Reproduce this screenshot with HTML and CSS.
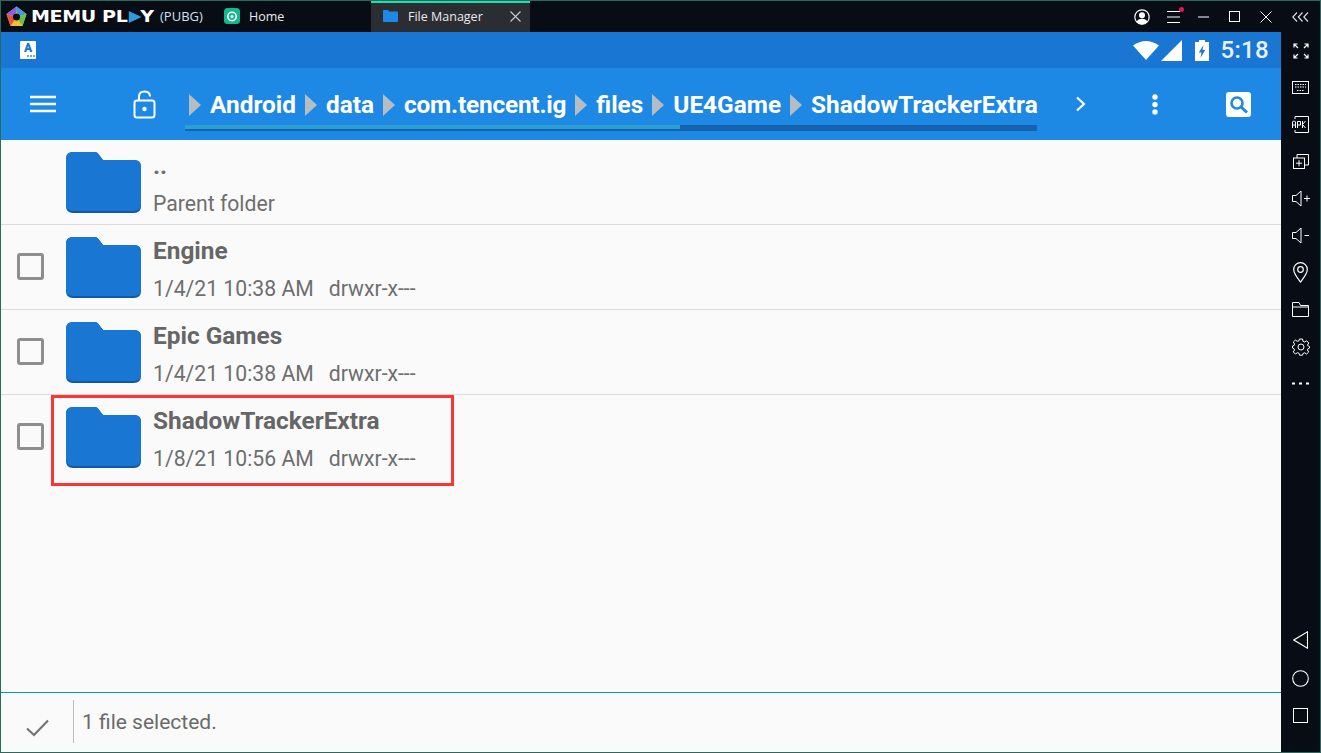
FILE: index.html
```html
<!DOCTYPE html>
<html lang="en">
<head>
<meta charset="utf-8">
<title>File Manager</title>
<link rel="stylesheet" href="styles.css">
</head>
<body>
<svg class="defs" width="0" height="0" aria-hidden="true">
  <symbol id="folder" viewBox="0 0 75 61">
    <path d="M7 0H29Q31 0 32 1.500L37 8H68Q75 8 75 15V54Q75 61 68 61H7Q0 61 0 54V7Q0 0 7 0Z" fill="#0f5aa8"/>
    <path d="M7 0H29Q31 0 32 1.500L37 8H68Q75 8 75 15V52Q75 59 68 59H7Q0 59 0 52V7Q0 0 7 0Z" fill="#1976d2"/>
  </symbol>
</svg>
<div class="window">
  <header class="titlebar">
    <div class="brand">
      <svg class="logo" width="21" height="21" viewBox="0 0 21 21">
        <path d="M10.5 0.5 20.5 8 16.5 20H4.5L0.5 8Z" fill="#f2c230"/>
        <path d="M10.5 0.5 20.5 8 14 10 10.5 6Z" fill="#3b9be8"/>
        <path d="M10.5 0.5 10.5 6 7 10 0.5 8Z" fill="#8a5ce8"/>
        <path d="M0.5 8 7 10 8 15 4.5 20Z" fill="#e8553f"/>
        <path d="M16.5 20 13 15 14 10 20.5 8Z" fill="#66c24a"/>
        <circle cx="10.5" cy="11" r="3.6" fill="#0a0d14"/>
      </svg>
      <div class="wordmark-box"><span class="wordmark">MEMU PL<span class="play-tri"></span>Y</span></div>
      <span class="pubg">(PUBG)</span>
    </div>
    <div class="tab">
      <svg width="16" height="16" viewBox="0 0 16 16"><rect width="16" height="16" rx="3.5" fill="#14b88f"/><circle cx="8" cy="8.5" r="4.2" fill="none" stroke="#fff" stroke-width="1.6"/><circle cx="8" cy="8.5" r="1.5" fill="#fff"/></svg>
      <span>Home</span>
    </div>
    <div class="tab tab-active">
      <svg width="15" height="12" viewBox="0 0 15 12"><path d="M1 0H5L6.5 1.5H14Q15 1.500 15 2.500V11Q15 12 14 12H1Q0 12 0 11V1Q0 0 1 0Z" fill="#1e88e5"/></svg>
      <span class="tab-label">File Manager</span>
      <svg width="11" height="11" viewBox="0 0 11 11"><path d="M.5 .5 10.500 10.500M10.500 .5 .5 10.500" stroke="#c8ccd0" stroke-width="1.100" fill="none"/></svg>
    </div>
    <div class="win-controls">
      <svg width="16" height="16" viewBox="0 0 16 16"><circle cx="8" cy="8" r="7.200" fill="none" stroke="#fff" stroke-width="1.200"/><circle cx="8" cy="6.200" r="3" fill="#fff"/><path d="M2.500 13Q4 9.800 8 9.800T13.500 13Q11 15.400 8 15.400T2.500 13Z" fill="#fff"/></svg>
      <span class="menu-wrap">
        <svg width="13" height="12" viewBox="0 0 13 12"><path d="M0 .5H13M0 6H13M0 11.500H13" stroke="#fff" fill="none"/></svg>
        <i class="dot"></i>
      </span>
      <svg width="11" height="2" viewBox="0 0 11 2"><path d="M0 1H11" stroke="#fff" fill="none"/></svg>
      <svg width="11" height="11" viewBox="0 0 11 11"><rect x=".5" y=".5" width="10" height="10" fill="none" stroke="#fff"/></svg>
      <svg width="12" height="12" viewBox="0 0 12 12"><path d="M.5 .5 11.500 11.500M11.500 .5 .5 11.500" stroke="#fff" fill="none"/></svg>
      <svg width="17" height="10" viewBox="0 0 17 10"><path d="M5 .5.800 5 5 9.500M10.500 .5 6.300 5 10.500 9.500M16 .5 11.800 5 16 9.500" stroke="#dfe2e6" stroke-width="1.100" fill="none"/></svg>
    </div>
  </header>

  <div class="body">
    <main class="android">
      <div class="statusbar">
        <div class="a-badge"><span>A</span><i class="a-dots"></i></div>
        <div class="status-right">
          <svg width="26" height="20" viewBox="0 0 26 20"><path d="M0 5.500Q13 -3.500 26 5.500L13 20Z" fill="#fff"/></svg>
          <svg class="signal" width="21" height="21" viewBox="0 0 21 21"><path d="M21 0V21H0Z" fill="#fff"/></svg>
          <svg class="battery" width="14" height="21" viewBox="0 0 14 21"><path d="M4 0H10V2H14V21H0V2H4Z" fill="#fff"/><path d="M8.500 5 3.800 12.500H6.500L5.500 18 10.200 10H7.500Z" fill="#1976d2"/></svg>
          <span class="clock">5:18</span>
        </div>
      </div>

      <div class="toolbar">
        <svg class="ic-menu" width="26" height="18" viewBox="0 0 26 18"><path d="M0 2H26M0 9H26M0 16H26" stroke="#fff" stroke-width="2.400" fill="none"/></svg>
        <svg class="ic-lock" width="23" height="29" viewBox="0 0 23 29"><path d="M6 10V6.500Q6 1.500 11.500 1.500T17 6.500" stroke="#fff" stroke-width="2" fill="none"/><rect x="1.500" y="10.500" width="20" height="17" rx="2.500" fill="none" stroke="#fff" stroke-width="2"/><circle cx="11.500" cy="19" r="2.200" fill="#fff"/></svg>
        <nav class="crumbs">
          <div class="crumb-row">
            <span class="crumb">Android</span>
            <span class="crumb">data</span>
            <span class="crumb crumb-tight">com.tencent.ig</span>
            <span class="crumb">files</span>
            <span class="crumb">UE4Game</span>
            <span class="crumb">ShadowTrackerExtra</span>
          </div>
          <div class="crumb-scroll"><div class="crumb-thumb"></div></div>
        </nav>
        <svg class="ic-next" width="11" height="16" viewBox="0 0 11 16"><path d="M2 1.500 9 8 2 14.500" stroke="#fff" stroke-width="2.200" fill="none"/></svg>
        <svg class="ic-more" width="6" height="21" viewBox="0 0 6 21"><circle cx="3" cy="3" r="2.700" fill="#fff"/><circle cx="3" cy="10.500" r="2.700" fill="#fff"/><circle cx="3" cy="18" r="2.700" fill="#fff"/></svg>
        <svg class="ic-search" width="25" height="25" viewBox="0 0 25 25"><rect width="25" height="25" rx="3" fill="#fff"/><circle cx="11" cy="11" r="5.500" fill="none" stroke="#1e88e5" stroke-width="2.600"/><path d="M15 15 21 20.500" stroke="#1e88e5" stroke-width="3" fill="none"/></svg>
      </div>

      <div class="list">
        <div class="row">
          <span class="check check-empty"></span>
          <svg class="folder" width="75" height="61"><use href="#folder"/></svg>
          <div class="meta">
            <div class="name name-parent">..</div>
            <div class="sub">Parent folder</div>
          </div>
        </div>
        <div class="row">
          <span class="check"></span>
          <svg class="folder" width="75" height="61"><use href="#folder"/></svg>
          <div class="meta">
            <div class="name">Engine</div>
            <div class="sub"><span class="date">1/4/21 10:38 AM</span><span>drwxr-x---</span></div>
          </div>
        </div>
        <div class="row">
          <span class="check"></span>
          <svg class="folder" width="75" height="61"><use href="#folder"/></svg>
          <div class="meta">
            <div class="name">Epic Games</div>
            <div class="sub"><span class="date">1/4/21 10:38 AM</span><span>drwxr-x---</span></div>
          </div>
        </div>
        <div class="row row-last">
          <span class="check"></span>
          <svg class="folder" width="75" height="61"><use href="#folder"/></svg>
          <div class="meta">
            <div class="name">ShadowTrackerExtra</div>
            <div class="sub"><span class="date">1/8/21 10:56 AM</span><span>drwxr-x---</span></div>
          </div>
          <div class="highlight"></div>
        </div>
      </div>

      <footer class="selbar">
        <svg class="ic-check" width="23" height="18" viewBox="0 0 23 18"><path d="M1 9.500 8 16 22 1.500" stroke="#757575" stroke-width="2.200" fill="none"/></svg>
        <div class="sel-text">1 file selected.</div>
      </footer>
    </main>

    <aside class="side">
      <div class="side-top">
        <span class="side-cell"><svg width="16" height="16" viewBox="0 0 16 16"><path d="M1 4.500V1H4.500M1 1 5 5M11.500 1H15V4.500M15 1 11 5M1 11.500V15H4.500M1 15 5 11M11.500 15H15V11.500M15 15 11 11" stroke="#fff" stroke-width="1.200" fill="none"/></svg></span>
        <span class="side-cell"><svg width="17" height="13" viewBox="0 0 17 13"><rect x=".5" y=".5" width="16" height="12" fill="none" stroke="#fff"/><path d="M3 3.500H14M3 6H14M5 9.500H12" stroke="#fff" stroke-dasharray="1.500 1" fill="none"/></svg></span>
        <span class="side-cell"><svg width="17" height="17" viewBox="0 0 17 17"><path d="M3 3V.5H16.500V16.500H3V14" stroke="#fff" fill="none"/><path d="M.5 12V6L1.500 5H2.500L3.500 6V12M.5 9H3.500M5.500 12V5.500H8.500V9H5.500M10.500 5V12M13.500 5 10.500 8.500 13.500 12" stroke="#fff" fill="none"/></svg></span>
        <span class="side-cell"><svg width="16" height="15" viewBox="0 0 16 15"><path d="M4 4V.5H15.500V11H11" stroke="#fff" fill="none"/><rect x=".5" y="4" width="11" height="10.500" fill="none" stroke="#fff"/><path d="M3 9.200H9M6 6.200V12.200" stroke="#fff" fill="none"/></svg></span>
        <span class="side-cell"><svg width="18" height="17" viewBox="0 0 18 17"><path d="M.5 5.500H4L9 1V16L4 11.500H.5Z" stroke="#fff" fill="none"/><path d="M12 8.500H18M15 5.500V11.500" stroke="#fff" fill="none"/></svg></span>
        <span class="side-cell"><svg width="18" height="17" viewBox="0 0 18 17"><path d="M.5 5.500H4L9 1V16L4 11.500H.5Z" stroke="#fff" fill="none"/><path d="M12.500 8.500H17" stroke="#fff" fill="none"/></svg></span>
        <span class="side-cell"><svg width="15" height="21" viewBox="0 0 15 21"><path d="M7.500 20C4 15.500.7 11.500.7 7.500A6.800 6.800 0 0 1 14.300 7.500C14.300 11.500 11 15.500 7.500 20Z" stroke="#fff" stroke-width="1.200" fill="none"/><circle cx="7.500" cy="7.500" r="2.800" stroke="#fff" stroke-width="1.200" fill="none"/></svg></span>
        <span class="side-cell"><svg width="17" height="15" viewBox="0 0 17 15"><path d="M.5 14.500V.5H7L8.500 3.500H16.500V14.500ZM.5 5H16.500" stroke="#fff" fill="none"/></svg></span>
        <span class="side-cell"><svg width="18" height="18" viewBox="0 0 18 18"><path d="M7.500 1H10.500L11 3.300 12.700 4 14.700 2.800 16.800 5 15.500 7 16.200 8 17.500 8.500V10L16 10.700 15.500 12 16.700 14 14.600 16 12.600 14.800 11 15.500 10.500 17.200H7.500L7 15.300 5.500 14.700 3.400 16 1.300 13.900 2.500 12 1.900 10.700.5 10V8L2 7.500 2.500 6 1.300 4 3.400 2 5.300 3.300 7 2.700Z" stroke="#fff" fill="none"/><circle cx="9" cy="9" r="3" stroke="#fff" fill="none"/></svg></span>
        <span class="side-cell"><svg width="17" height="3" viewBox="0 0 17 3"><path d="M0 1.500H17" stroke="#fff" stroke-width="2" stroke-dasharray="3 4" fill="none"/></svg></span>
      </div>
      <div class="side-bottom">
        <svg width="15" height="18" viewBox="0 0 15 18"><path d="M14.500 .8V17.200L.8 9Z" stroke="#fff" stroke-width="1.100" fill="none"/></svg>
        <svg width="17" height="17" viewBox="0 0 17 17"><circle cx="8.500" cy="8.500" r="7.800" stroke="#fff" stroke-width="1.100" fill="none"/></svg>
        <svg width="15" height="15" viewBox="0 0 15 15"><rect x=".5" y=".5" width="14" height="14" stroke="#fff" fill="none"/></svg>
      </div>
    </aside>
  </div>
</div>
</body>
</html>
```

FILE: styles.css
```css
* { box-sizing: border-box; }
html, body { margin: 0; padding: 0; }
body { width: 1321px; height: 753px; overflow: hidden; font-family: Roboto, "Liberation Sans", sans-serif; background: #080c14; }
svg { display: block; flex: none; }
.defs { position: absolute; }

.window { width: 1321px; height: 753px; display: flex; flex-direction: column; border: 1px solid #2a6a5e; background: #080c14; }

/* title bar */
.titlebar { height: 31px; flex: none; display: flex; align-items: center; background: #080c14; color: #e8eaec; }
.brand { width: 223px; height: 31px; flex: none; display: flex; align-items: center; padding: 0 0 1px 5px; }
.wordmark-box { width: 126px; margin-left: 4px; flex: none; }
.wordmark { font-family: "DejaVu Sans", sans-serif; font-weight: 700; font-size: 15px; line-height: 16px; color: #fff; letter-spacing: -0.300px; white-space: nowrap; display: inline-flex; align-items: center; transform: scaleX(1.270); transform-origin: left; }
.play-tri { width: 0; height: 0; margin: 0 -1px 0 1px; border-left: 10px solid #2e9be0; border-top: 6px solid transparent; border-bottom: 6px solid transparent; }
.pubg { margin-left: 3px; font-family: "Open Sans", sans-serif; font-size: 13px; color: #cfe0ee; white-space: nowrap; }
.tab { display: flex; align-items: center; gap: 9px; width: 147px; height: 31px; padding-bottom: 1px; white-space: nowrap; font-family: "Open Sans", sans-serif; font-size: 12.500px; }
.tab-active { width: 159px; padding: 0 0 3px 12px; gap: 10px; background: #2a2e33; border-top: 2px solid #1de0b0; }
.tab-label { width: 92px; }
.win-controls { margin-left: auto; display: flex; align-items: center; padding-right: 11px; }
.win-controls > :nth-child(1) { margin-right: 17px; }
.win-controls > :nth-child(2) { margin-right: 18px; }
.win-controls > :nth-child(3) { margin-right: 20px; }
.win-controls > :nth-child(4) { margin-right: 20px; }
.win-controls > :nth-child(5) { margin-right: 20px; }
.menu-wrap { position: relative; display: block; }
.dot { position: absolute; right: -4px; top: -4px; width: 5px; height: 5px; border-radius: 50%; background: #f0105a; }

/* main */
.body { flex: 1; min-height: 0; display: flex; }
.android { width: 1280px; flex: none; display: flex; flex-direction: column; background: #fafafa; }
.side { flex: 1; display: flex; flex-direction: column; justify-content: space-between; align-items: center; padding: 0 0 29px; background: #080c14; }
.side-top { display: flex; flex-direction: column; align-items: center; }
.side-cell { height: 37px; display: flex; align-items: center; justify-content: center; }
.side-bottom { display: flex; flex-direction: column; align-items: center; gap: 21px; }

.statusbar { height: 36px; flex: none; display: flex; align-items: center; justify-content: space-between; background: #1976d2; padding: 0 12px 0 19px; }
.a-badge { width: 16px; height: 18px; background: #fff; border-radius: 1px; display: flex; flex-direction: column; align-items: center; color: #1976d2; font-weight: 900; font-size: 12px; line-height: 14px; }
.a-dots { width: 8px; height: 2px; margin: 0 0 0 6px; background: repeating-linear-gradient(90deg, #6aa6e4 0 2px, transparent 2px 3px); }
.status-right { display: flex; align-items: center; }
.signal { margin-left: 2px; }
.battery { margin: 0 12px 0 13px; }
.clock { font-size: 24px; font-weight: 500; color: #e8f1fb; line-height: 24px; letter-spacing: 0.300px; }

.toolbar { height: 72px; flex: none; display: flex; align-items: center; background: #1e88e5; padding-left: 29px; }
.ic-menu { margin-right: 77px; }
.ic-lock { margin-right: 29px; }
.crumbs { width: 852px; flex: none; align-self: flex-start; display: flex; flex-direction: column; padding-top: 16px; }
.crumb-row { height: 41px; display: flex; align-items: center; white-space: nowrap; padding-left: 4px; }
.crumb { font-size: 24.400px; font-weight: 700; color: #fff; display: flex; align-items: center; margin-right: 9px; }
.crumb-tight { letter-spacing: -0.200px; }
.crumb::before { content: ""; width: 0; height: 0; border-left: 12px solid #b4bcc4; border-top: 11px solid transparent; border-bottom: 11px solid transparent; margin-right: 9px; }
.crumb-scroll { height: 6px; background: #1762ad; }
.crumb-thumb { width: 495px; height: 4px; background: #2ca0d2; }
.ic-next { margin-left: 38px; }
.ic-more { margin-left: 66px; }
.ic-search { margin-left: 68px; }

/* list */
.list { flex: 1; min-height: 0; display: flex; flex-direction: column; }
.row { height: 85px; flex: none; position: relative; display: flex; align-items: flex-start; border-bottom: 1px solid #dcdcdc; padding: 12px 0 0 16px; }
.row-last { border-bottom: 0; }
.check { width: 27px; height: 27px; margin: 16px 22px 0 0; border: 3px solid #8e8e8e; border-radius: 3px; flex: none; }
.check-empty { visibility: hidden; }
.folder { flex: none; }
.meta { margin-left: 12px; color: #666; }
.name { font-size: 24.400px; font-weight: 700; line-height: 28px; white-space: nowrap; }
.name-parent { color: #707070; }
.sub { font-size: 21.200px; line-height: 24px; margin-top: 12px; white-space: nowrap; color: #6e6e6e; }
.date { margin-right: 15px; }
.highlight { position: absolute; left: 50px; top: 0; width: 403px; height: 91px; border: 3px solid #fa3535; }

/* selection bar */
.selbar { height: 60px; flex: none; display: flex; align-items: center; border-top: 1px solid #0099cc; background: #fafafa; padding-left: 25px; }
.ic-check { margin-top: 11px; }
.sel-text { margin: 0 0 2px 24px; height: 43px; padding-left: 8px; border-left: 1px solid #bdbdbd; font-size: 21px; line-height: 45px; color: #6a6a6a; }
```
